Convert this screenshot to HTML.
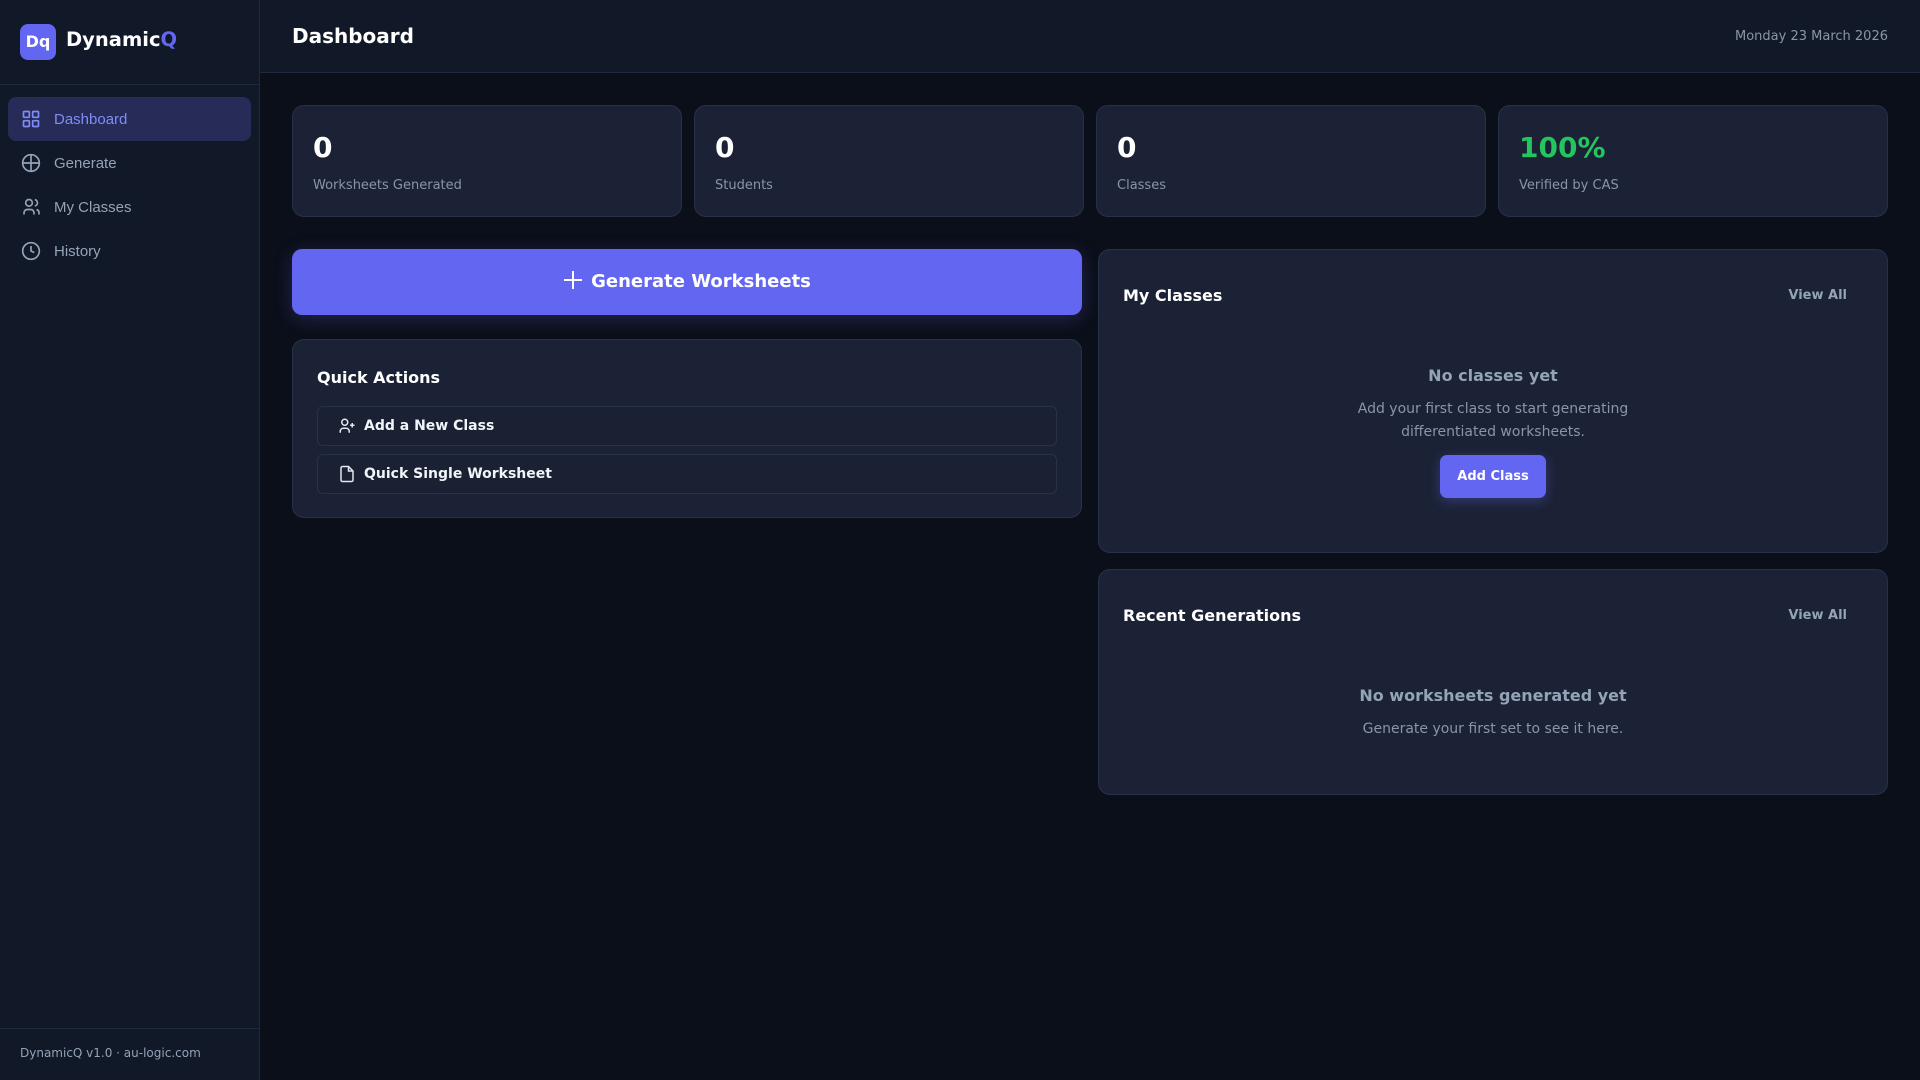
<!DOCTYPE html>
<html><head><meta charset="utf-8"><style>
*{box-sizing:border-box;margin:0;padding:0}
body{width:1920px;height:1080px;background:#0b0f1a;font-family:"DejaVu Sans","Liberation Sans",sans-serif;color:#f1f5f9;position:relative;overflow:hidden}
.sb{position:absolute;left:0;top:0;width:260px;height:1080px;background:#111827;border-right:1px solid #1f2a3d}
.logo{position:absolute;left:20px;top:24px;width:36px;height:36px;border-radius:8px;background:#6366f1;color:#fff;font-weight:bold;font-size:16px;line-height:36px;text-align:center}
.brand{position:absolute;left:66px;top:28px;font-size:19.5px;font-weight:bold;color:#fff}
.brand span{color:#6366f1}
.sbh{position:absolute;left:0;top:84px;width:259px;border-top:1px solid #1f2a3d}
.nav{position:absolute;left:8px;width:243px;height:44px;border-radius:8px;font-family:"Liberation Sans",sans-serif;font-size:15px;color:#94a3b8;line-height:46px;padding-left:46px}
.nav svg{position:absolute;left:13px;top:12px}
.nav.a{background:#272b58;color:#818cf8}
.ft{position:absolute;left:0;top:1028px;width:259px;border-top:1px solid #1f2a3d;padding:17px 20px;font-size:12px;color:#94a3b8}
.hd{position:absolute;left:260px;top:0;width:1660px;height:73px;background:#111827;border-bottom:1px solid #1f2a3d}
.hd h1{position:absolute;left:32px;top:24px;font-size:20px;color:#fff}
.hd .d{position:absolute;right:32px;top:29px;font-size:13px;color:#8b95a8}
.card{position:absolute;background:#1b2235;border:1px solid #273248;border-radius:12px}
.stat .n{position:absolute;left:20px;top:25px;font-size:28px;font-weight:bold;color:#fff}
.stat .l{position:absolute;left:20px;top:72px;font-size:13px;color:#8b95a8}
.gen{position:absolute;left:292px;top:249px;width:790px;height:66px;background:#6366f1;border-radius:10px;box-shadow:0 4px 18px rgba(99,102,241,.25);color:#fff;font-weight:bold;font-size:18px;text-align:center;line-height:66px}
.gen svg{vertical-align:-3px;margin-right:8px}
.ct{position:absolute;left:24px;font-size:16px;font-weight:bold;color:#fff}
.qb{position:absolute;left:24px;width:740px;height:40px;border:1px solid #273248;border-radius:6px;background:#1a2133;font-size:14px;font-weight:bold;color:#f1f5f9;line-height:38px;padding-left:46px}
.qb svg{position:absolute;left:20px;top:10px}
.va{position:absolute;right:40px;font-size:13px;font-weight:bold;color:#94a3b8}
.em{position:absolute;left:0;width:100%;text-align:center}
</style></head><body>
<div class="sb">
<div class="logo">Dq</div><div class="brand">Dynamic<span>Q</span></div>
<div class="sbh"></div>
<div class="nav a" style="top:97px"><svg width="20" height="20" viewBox="0 0 24 24" fill="none" stroke="#818cf8" stroke-width="2"><rect x="3" y="3" width="7" height="7" rx="1"/><rect x="14" y="3" width="7" height="7" rx="1"/><rect x="3" y="14" width="7" height="7" rx="1"/><rect x="14" y="14" width="7" height="7" rx="1"/></svg>Dashboard</div>
<div class="nav" style="top:141px"><svg width="20" height="20" viewBox="0 0 24 24" fill="none" stroke="#94a3b8" stroke-width="2"><circle cx="12" cy="12" r="10"/><path d="M12 2v20M2 12h20"/></svg>Generate</div>
<div class="nav" style="top:185px"><svg width="21" height="20" viewBox="0 0 24 24" fill="none" stroke="#94a3b8" stroke-width="2"><circle cx="9" cy="7" r="4"/><path d="M3 21v-2a4 4 0 0 1 4-4h4a4 4 0 0 1 4 4v2M16 3.1a4 4 0 0 1 0 7.8M21 21v-2a4 4 0 0 0-3-3.9"/></svg>My Classes</div>
<div class="nav" style="top:229px"><svg width="20" height="20" viewBox="0 0 24 24" fill="none" stroke="#94a3b8" stroke-width="2"><circle cx="12" cy="12" r="10"/><path d="M12 6v6l4 2"/></svg>History</div>
<div class="ft">DynamicQ v1.0 · au-logic.com</div>
</div>
<div class="hd"><h1>Dashboard</h1><div class="d">Monday 23 March 2026</div></div>

<div class="card stat" style="left:292px;top:105px;width:390px;height:112px"><div class="n">0</div><div class="l">Worksheets Generated</div></div>
<div class="card stat" style="left:694px;top:105px;width:390px;height:112px"><div class="n">0</div><div class="l">Students</div></div>
<div class="card stat" style="left:1096px;top:105px;width:390px;height:112px"><div class="n">0</div><div class="l">Classes</div></div>
<div class="card stat" style="left:1498px;top:105px;width:390px;height:112px"><div class="n" style="color:#22c55e">100%</div><div class="l">Verified by CAS</div></div>

<div class="gen"><svg width="20" height="20" viewBox="0 0 20 20" stroke="#fff" stroke-width="2"><path d="M10 1v18M1 10h18"/></svg>Generate Worksheets</div>

<div class="card" style="left:292px;top:339px;width:790px;height:179px">
<div class="ct" style="top:28px">Quick Actions</div>
<div class="qb" style="top:66px"><svg width="18" height="18" viewBox="0 0 24 24" fill="none" stroke="#e2e8f0" stroke-width="2"><circle cx="9" cy="7" r="4"/><path d="M3 21v-2a4 4 0 0 1 4-4h4a4 4 0 0 1 4 4v2M19 8v6M16 11h6"/></svg>Add a New Class</div>
<div class="qb" style="top:114px"><svg width="18" height="18" viewBox="0 0 24 24" fill="none" stroke="#e2e8f0" stroke-width="2"><path d="M14 2H6a2 2 0 0 0-2 2v16a2 2 0 0 0 2 2h12a2 2 0 0 0 2-2V8z"/><path d="M14 2v6h6"/></svg>Quick Single Worksheet</div>
</div>

<div class="card" style="left:1098px;top:249px;width:790px;height:304px">
<div class="ct" style="top:36px">My Classes</div><div class="va" style="top:38px">View All</div>
<div class="em" style="top:116px;font-size:16px;font-weight:bold;color:#94a3b8">No classes yet</div>
<div class="em" style="top:148px;font-size:14px;line-height:23px;color:#8b95a8">Add your first class to start generating<br>differentiated worksheets.</div>
<div style="position:absolute;left:341px;top:205px;width:106px;height:43px;border-radius:7px;background:#6366f1;box-shadow:0 3px 12px rgba(99,102,241,.35);color:#fff;font-size:13px;font-weight:bold;text-align:center;line-height:43px">Add Class</div>
</div>

<div class="card" style="left:1098px;top:569px;width:790px;height:226px">
<div class="ct" style="top:36px">Recent Generations</div><div class="va" style="top:38px">View All</div>
<div class="em" style="top:116px;font-size:16px;font-weight:bold;color:#94a3b8">No worksheets generated yet</div>
<div class="em" style="top:151px;font-size:14px;color:#8b95a8">Generate your first set to see it here.</div>
</div>
</body></html>
